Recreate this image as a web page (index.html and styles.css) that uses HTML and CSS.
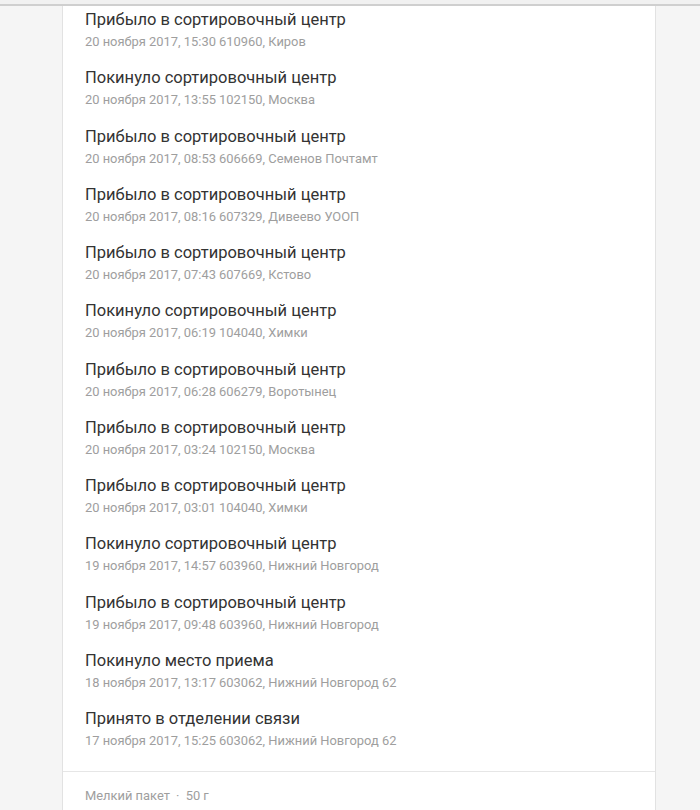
FILE: index.html
```html
<!DOCTYPE html>
<html lang="ru">
<head>
    <meta charset="UTF-8">
    <title>Отслеживание</title>
    <link rel="stylesheet" href="styles.css">
</head>
<body>
    <div class="topbar"></div>

    <div class="tracking-card">
        <ul class="history">
            <li class="history-item">
                <div class="history-title">Прибыло в сортировочный центр</div>
                <div class="history-meta">20 ноября 2017, 15:30 610960, Киров</div>
            </li>
            <li class="history-item">
                <div class="history-title">Покинуло сортировочный центр</div>
                <div class="history-meta">20 ноября 2017, 13:55 102150, Москва</div>
            </li>
            <li class="history-item">
                <div class="history-title">Прибыло в сортировочный центр</div>
                <div class="history-meta">20 ноября 2017, 08:53 606669, Семенов Почтамт</div>
            </li>
            <li class="history-item">
                <div class="history-title">Прибыло в сортировочный центр</div>
                <div class="history-meta">20 ноября 2017, 08:16 607329, Дивеево УООП</div>
            </li>
            <li class="history-item">
                <div class="history-title">Прибыло в сортировочный центр</div>
                <div class="history-meta">20 ноября 2017, 07:43 607669, Кстово</div>
            </li>
            <li class="history-item">
                <div class="history-title">Покинуло сортировочный центр</div>
                <div class="history-meta">20 ноября 2017, 06:19 104040, Химки</div>
            </li>
            <li class="history-item">
                <div class="history-title">Прибыло в сортировочный центр</div>
                <div class="history-meta">20 ноября 2017, 06:28 606279, Воротынец</div>
            </li>
            <li class="history-item">
                <div class="history-title">Прибыло в сортировочный центр</div>
                <div class="history-meta">20 ноября 2017, 03:24 102150, Москва</div>
            </li>
            <li class="history-item">
                <div class="history-title">Прибыло в сортировочный центр</div>
                <div class="history-meta">20 ноября 2017, 03:01 104040, Химки</div>
            </li>
            <li class="history-item">
                <div class="history-title">Покинуло сортировочный центр</div>
                <div class="history-meta">19 ноября 2017, 14:57 603960, Нижний Новгород</div>
            </li>
            <li class="history-item">
                <div class="history-title">Прибыло в сортировочный центр</div>
                <div class="history-meta">19 ноября 2017, 09:48 603960, Нижний Новгород</div>
            </li>
            <li class="history-item">
                <div class="history-title">Покинуло место приема</div>
                <div class="history-meta">18 ноября 2017, 13:17 603062, Нижний Новгород 62</div>
            </li>
            <li class="history-item">
                <div class="history-title">Принято в отделении связи</div>
                <div class="history-meta">17 ноября 2017, 15:25 603062, Нижний Новгород 62</div>
            </li>
        </ul>

        <div class="parcel-info">
            <span>Мелкий пакет</span>
            <span class="dot">·</span>
            <span>50 г</span>
        </div>
    </div>
</body>
</html>
```

FILE: styles.css
```css
body {
    margin: 0;
    padding: 0;
    background: #f5f5f5;
    font-family: Roboto, 'Noto Sans', sans-serif;
}

/* fixed header strip over the scrolled content */
.topbar {
    position: fixed;
    top: 0;
    left: 0;
    right: 0;
    height: 4px;
    background: #f1f1f1;
    border-bottom: 2px solid #cfcfcf;
    z-index: 2;
}

.tracking-card {
    margin-left: 62px;
    width: 592px;
    min-height: 810px;
    background: #fff;
    border-left: 1px solid #e2e2e2;
    border-right: 1px solid #e2e2e2;
}

.history {
    list-style: none;
    margin: 0;
    padding: 1.6px 0 12px;
}

.history-item {
    padding: 8.625px 22px;
}

.history-title {
    font-size: 16.5px;
    line-height: 20px;
    color: #333;
}

.history-meta {
    margin-top: 3px;
    font-size: 12.9px;
    line-height: 18px;
    color: #9e9e9e;
}

.parcel-info {
    border-top: 1px solid #e6e6e6;
    padding: 15px 22px;
    font-size: 12.9px;
    line-height: 18px;
    color: #9e9e9e;
}

.parcel-info .dot {
    margin: 0 3px;
}
```
